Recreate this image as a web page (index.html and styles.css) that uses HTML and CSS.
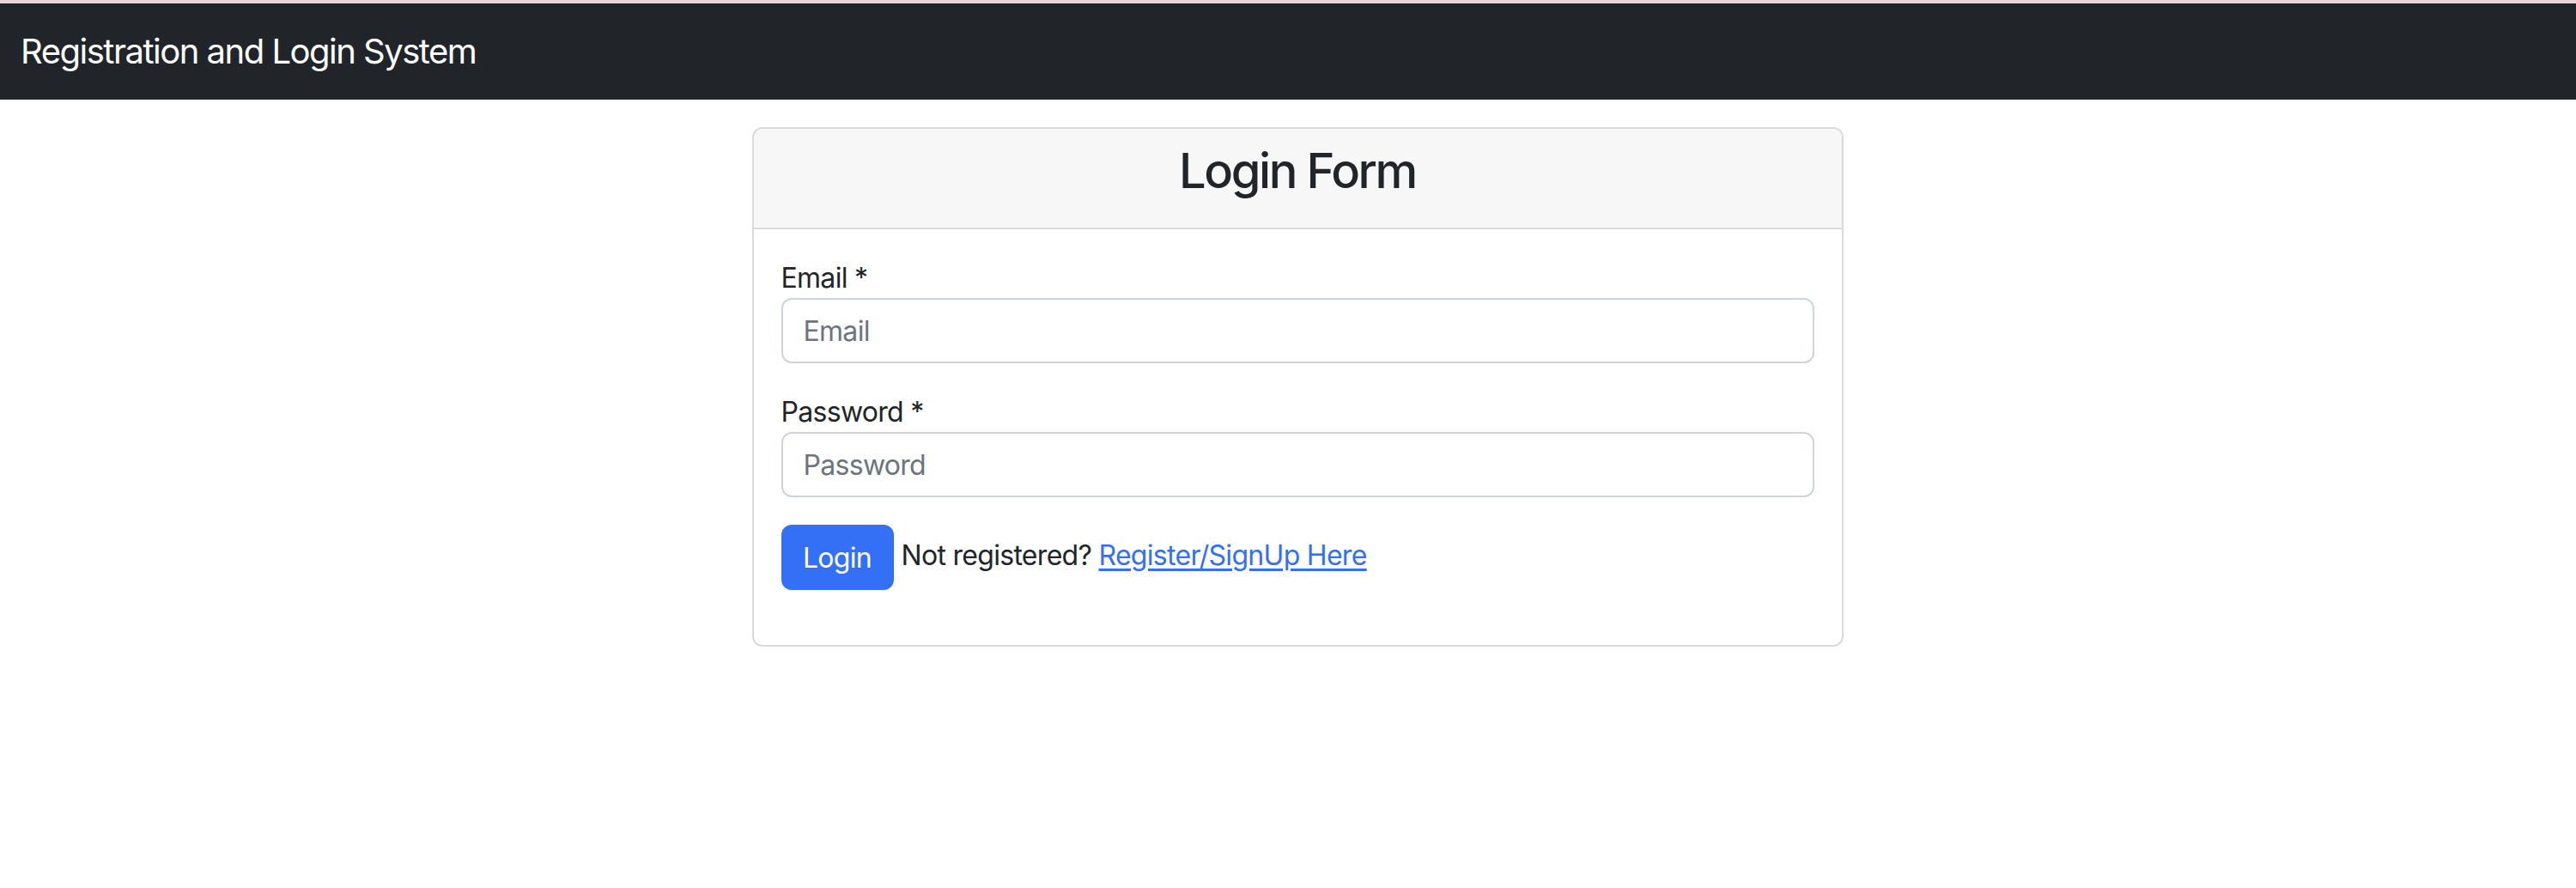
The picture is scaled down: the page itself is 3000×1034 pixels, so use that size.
FILE: index.html
```html
<!DOCTYPE html>
<html lang="en">
<head>
<meta charset="utf-8">
<title>Login</title>
<link rel="stylesheet" href="styles.css">
</head>
<body>
<nav class="navbar">
  <span class="brand">Registration and Login System</span>
</nav>
<main class="main">
  <div class="card">
    <div class="card-header">
      <h3 class="card-title">Login Form</h3>
    </div>
    <div class="card-body">
      <form class="form">
        <div class="group">
          <label class="label" for="email">Email *</label>
          <input class="input" id="email" type="email" placeholder="Email">
        </div>
        <div class="group">
          <label class="label" for="password">Password *</label>
          <input class="input" id="password" type="password" placeholder="Password">
        </div>
        <div class="group actions">
          <button class="btn" type="button">Login</button>
          <span class="note">Not registered? <a class="link" href="#">Register/SignUp Here</a></span>
        </div>
      </form>
    </div>
  </div>
</main>
</body>
</html>
```
FILE: styles.css
```css
* { box-sizing: border-box; }
html, body { margin: 0; padding: 0; background: #ffffff; }
body {
  font-family: Inter, "Noto Sans", "Liberation Sans", sans-serif;
  font-size: 32px;
  line-height: 1.5;
  color: #212529;
}
.navbar {
  border-top: 4px solid #ecd3d7;
  height: 116px;
  background: #212529;
  display: flex;
  align-items: center;
  padding: 0 24px;
}
.brand {
  color: #ffffff;
  font-size: 40px;
  line-height: 1.5;
  letter-spacing: -1.5px;
}
.main {
  display: flex;
  justify-content: center;
  padding: 32px 0 0 22px;
}
.card {
  width: 1271px;
  border: 2px solid #dadada;
  border-radius: 12px;
  overflow: hidden;
}
.card-header {
  background: #f7f7f7;
  border-bottom: 2px solid #dadada;
  padding: 16px 32px;
}
.card-title {
  margin: 0 0 16px;
  font-size: 56px;
  font-weight: 500;
  line-height: 1.2;
  text-align: center;
  letter-spacing: -2.4px;
}
.card-body { padding: 32px; }
.group { margin-bottom: 32px; }
.label {
  display: block;
  height: 48px;
  line-height: 46px;
  padding-top: 2px;
  letter-spacing: -0.7px;
}
.input {
  display: block;
  width: 100%;
  height: 76px;
  border: 2px solid #ced4da;
  border-radius: 12px;
  padding: 0 24px;
  font-family: inherit;
  font-size: 32px;
  color: #212529;
  background: #ffffff;
  letter-spacing: -0.7px;
}
.input::placeholder { color: #6c757d; }
.actions {
  display: flex;
  align-items: center;
  gap: 9px;
}
.btn {
  height: 76px;
  padding: 0 24px;
  background: #3470f6;
  color: #ffffff;
  border: none;
  border-radius: 12px;
  font-family: inherit;
  font-size: 32px;
  letter-spacing: -0.7px;
  min-width: 131px;
}
.note {
  letter-spacing: -0.7px;
  margin-top: -4px;
}
.link {
  color: #3470f6;
  text-decoration: underline;
  text-underline-offset: 4px;
}
```
